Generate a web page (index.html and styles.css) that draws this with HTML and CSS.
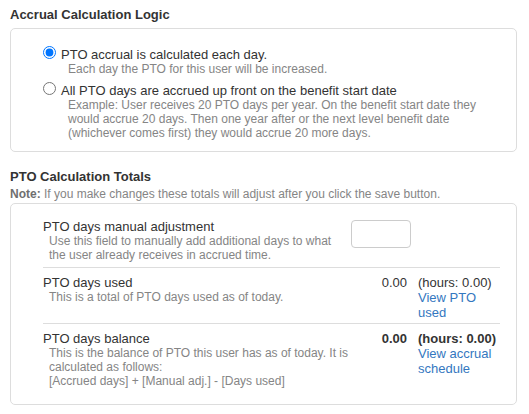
FILE: index.html
```html
<!DOCTYPE html>
<html lang="en">
<head>
<meta charset="utf-8">
<title>PTO Settings</title>
<link rel="stylesheet" href="styles.css">
</head>
<body>
<div class="page">
  <h2 class="section-title">Accrual Calculation Logic</h2>
  <div class="panel panel-options">
    <label class="option">
      <input class="option-radio" type="radio" name="accrual" checked>
      <span class="option-body">
        <span class="option-label">PTO accrual is calculated each day.</span>
        <span class="option-desc">Each day the PTO for this user will be increased.</span>
      </span>
    </label>
    <label class="option option-second">
      <input class="option-radio" type="radio" name="accrual">
      <span class="option-body">
        <span class="option-label">All PTO days are accrued up front on the benefit start date</span>
        <span class="option-desc">Example: User receives 20 PTO days per year. On the benefit start date they would accrue 20 days. Then one year after or the next level benefit date (whichever comes first) they would accrue 20 more days.</span>
      </span>
    </label>
  </div>

  <h2 class="section-title section-title-second">PTO Calculation Totals</h2>
  <p class="note"><strong>Note:</strong> If you make changes these totals will adjust after you click the save button.</p>
  <div class="panel panel-totals">
    <div class="total-row">
      <div class="total-label">
        <div class="total-name">PTO days manual adjustment</div>
        <div class="total-desc">Use this field to manually add additional days to what the user already receives in accrued time.</div>
      </div>
      <input class="adjust-input" type="text" aria-label="PTO days manual adjustment">
    </div>
    <div class="total-row">
      <div class="total-label">
        <div class="total-name">PTO days used</div>
        <div class="total-desc">This is a total of PTO days used as of today.</div>
      </div>
      <div class="total-value">0.00</div>
      <div class="total-hours">
        <div>(hours: 0.00)</div>
        <a class="total-link" href="#">View PTO used</a>
      </div>
    </div>
    <div class="total-row total-row-strong">
      <div class="total-label">
        <div class="total-name">PTO days balance</div>
        <div class="total-desc">This is the balance of PTO this user has as of today. It is calculated as follows:<br>[Accrued days] + [Manual adj.] - [Days used]</div>
      </div>
      <div class="total-value">0.00</div>
      <div class="total-hours">
        <div>(hours: 0.00)</div>
        <a class="total-link" href="#">View accrual schedule</a>
      </div>
    </div>
  </div>
</div>
</body>
</html>
```

FILE: styles.css
```css
* {
  box-sizing: border-box;
}

html, body {
  margin: 0;
  padding: 0;
  background: #ffffff;
}

body {
  font-family: "Liberation Sans", Arial, sans-serif;
  font-size: 13px;
  line-height: normal;
  color: #333333;
}

.page {
  padding: 0 12px 0 10px;
}

.section-title {
  margin: 7px 0 6px;
  font-size: 13px;
  font-weight: bold;
  color: #333333;
}

.section-title-second {
  margin: 17px 0 0;
}

.note {
  margin: 3px 0 2px;
  font-size: 12px;
  color: #858585;
}

.note strong {
  color: #6f6f6f;
}

.panel {
  border: 1px solid #dddddd;
  border-radius: 5px;
  background: #ffffff;
}

.panel-options {
  padding: 18px 16px 11px 32px;
}

.option {
  display: flex;
  align-items: flex-start;
  cursor: pointer;
}

.option-second {
  margin-top: 7px;
}

.option-radio {
  flex: none;
  width: 13px;
  height: 13px;
  margin: -1px 5px 0 0;
}

.option-body {
  display: flex;
  flex-direction: column;
}

.option-label {
  font-size: 13px;
  color: #333333;
}

.option-desc {
  margin-left: 7px;
  font-size: 12px;
  color: #858585;
}

.panel-totals {
  padding: 8px 16px 11px 32px;
}

.total-row {
  display: grid;
  grid-template-columns: 308px 67px 82px;
  align-items: start;
  padding: 7px 0 3px;
  border-bottom: 1px solid #dddddd;
}

.total-row:last-child {
  border-bottom: none;
}

.total-name {
  font-size: 13px;
  color: #333333;
}

.total-desc {
  padding-left: 6px;
  margin-bottom: 2px;
  font-size: 12px;
  color: #858585;
}

.adjust-input {
  grid-column: 2 / span 2;
  justify-self: start;
  width: 60px;
  height: 28px;
  margin: 1px 0 0;
  border: 1px solid #cccccc;
  border-radius: 4px;
  font: inherit;
  padding: 0 6px;
}

.total-value {
  text-align: right;
  padding-right: 11px;
  color: #333333;
}

.total-hours {
  color: #333333;
}

.total-link {
  display: block;
  color: #3477c0;
  text-decoration: none;
}

.total-row-strong .total-value,
.total-row-strong .total-hours > div {
  font-weight: bold;
}
```
